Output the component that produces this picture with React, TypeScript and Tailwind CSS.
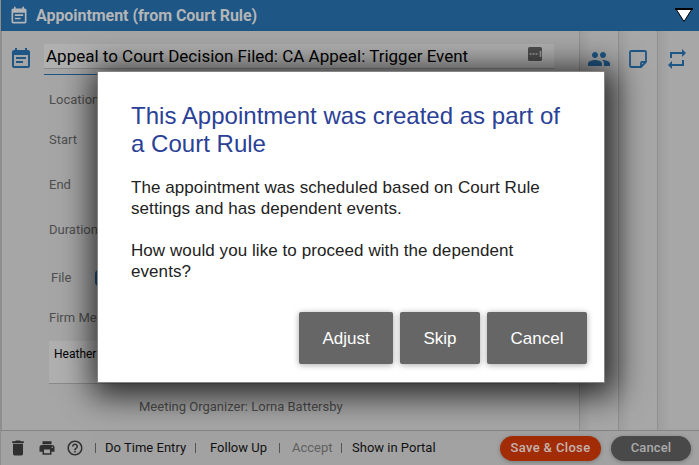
import type { ReactNode } from 'react'
import { MdDelete, MdEventNote, MdHelpOutline, MdPeople, MdPrint, MdRepeat } from 'react-icons/md'

/**
 * Appointment window with the Court Rule prompt open above it.
 */

const FIELDS = [
  { label: 'Location', className: 'h-10' },
  { label: 'Start', className: 'h-10' },
  { label: 'End', className: 'h-[50px]' },
  { label: 'Duration', className: 'h-10' },
  { label: 'File', className: 'mt-1 h-12 pl-[2px]' },
  { label: 'Firm Members', className: 'h-8' },
]

export default function App() {
  return (
    <div className="relative h-[465px] w-[699px] overflow-hidden bg-[#a6a6a6] font-['Roboto',sans-serif]">
      <div className="flex h-full border-l border-[#8e8e8e]">
        <div className="flex min-w-0 flex-1 flex-col">
          <Header />
          <div className="flex min-h-0 flex-1 border-l border-[#8e8e8e]">
            <Form />
            <SideColumn>
              <MdPeople size={24} />
            </SideColumn>
            <SideColumn>
              <NoteIcon />
            </SideColumn>
            <SideColumn>
              <MdRepeat size={24} />
            </SideColumn>
          </div>
          <Footer />
        </div>
      </div>
      <RuleDialog />
    </div>
  )
}

function Header() {
  return (
    <header className="flex h-[31px] shrink-0 items-center bg-[#1e5685] pl-2 pr-[6px] text-[#b3b5b7]">
      <MdEventNote size={20} />
      <h1 className="ml-[7px] text-[16px] font-bold leading-none tracking-[-0.05px]">
        Appointment (from Court Rule)
      </h1>
      <svg className="ml-auto" width="18" height="15" viewBox="0 0 18 15" aria-hidden="true">
        <path d="M1 1h16L9 13.5z" fill="#fff" stroke="#000" strokeWidth="1" />
        <path d="M0 1h18" stroke="#000" strokeWidth="2" />
      </svg>
    </header>
  )
}

function Form() {
  return (
    <main className="flex flex-1 flex-col">
      <div className="flex pt-[13px]">
        <MdEventNote size={24} className="ml-[7px] mt-[3px] text-[#1e5685]" />
        <div className="ml-[11px] h-[31px] w-[510px] border-b border-[#1e5685]">
          <div className="flex h-[25px] items-center justify-between border-b border-[#8a8a8a] bg-[#b0b0b0] pl-[2px] pr-3">
            <span className="pt-px text-[17px] text-black">
              Appeal to Court Decision Filed: CA Appeal: Trigger Event
            </span>
            <svg className="mb-1" width="14" height="14" viewBox="0 0 14 14" aria-hidden="true">
              <rect width="14" height="14" rx="1.5" fill="#4e4e4e" />
              <path d="M1.5 7h2M4.5 7h2M7.5 7h2M12.5 4v6" stroke="#a0a0a0" strokeWidth="1.5" />
            </svg>
          </div>
        </div>
      </div>
      <div className="mt-[5px] pl-[47px] text-[13px] text-[#4f4f4f]">
        {FIELDS.map((field) => (
          <div key={field.label} className={`flex items-center ${field.className}`}>
            <span>{field.label}</span>
            {field.label === 'File' && <span className="ml-6 h-4 w-10 rounded-sm bg-[#1e5685]" />}
          </div>
        ))}
      </div>
      <div className="ml-[47px] mt-[7px] h-[43px] w-[510px] border-b border-[#8a8a8a] bg-[#b0b0b0] pl-[5px] pt-[5px] text-xs leading-[17px] text-black">
        Heather
      </div>
      <p className="ml-[137px] mt-[15px] text-[13px] leading-4 text-[#4a4a4a]">
        Meeting Organizer: Lorna Battersby
      </p>
    </main>
  )
}

function SideColumn({ children }: { children: ReactNode }) {
  return (
    <aside className="flex w-[39px] shrink-0 justify-center border-l border-[#8f8f8f] bg-linear-to-r from-[#9e9e9e] to-[#a7a7a7] to-30% text-[#1e5685] last:w-[42px] last:pr-[3px]">
      <div className="flex h-[55px] items-center">{children}</div>
    </aside>
  )
}

function Footer() {
  return (
    <footer className="flex h-[35px] shrink-0 items-center border-t border-[#848484] bg-[#a2a2a2] pl-[7px] text-[13px] text-[#111]">
      <div className="flex w-[87px] shrink-0 items-center gap-[10px] text-[#2f2f2f]">
        <MdDelete size={20} />
        <MdPrint size={18} />
        <MdHelpOutline size={18} />
      </div>
      <Divider />
      <span className="w-[99px] shrink-0 pl-[9px] tracking-[0.02px]">Do Time Entry</span>
      <Divider />
      <span className="w-[83px] shrink-0 pl-[14px]">Follow Up</span>
      <Divider />
      <span className="w-[61px] shrink-0 pl-3 text-[#606060]">Accept</span>
      <Divider />
      <span className="shrink-0 pl-[10px]">Show in Portal</span>
      <button className="ml-auto h-[25px] w-[101px] shrink-0 rounded-full bg-[#a22c06] font-medium tracking-[0.35px] text-[#c4b4ae] shadow-[0_1px_4px_#777]">
        Save &amp; Close
      </button>
      <button className="ml-[10px] mr-2 h-[25px] w-20 shrink-0 rounded-full bg-[#494949] font-medium tracking-[0.15px] text-[#aaa] shadow-[0_1px_4px_#777]">
        Cancel
      </button>
    </footer>
  )
}

function Divider() {
  return <i className="block h-[10px] w-px shrink-0 bg-[#555]" />
}

function RuleDialog() {
  return (
    <section
      role="dialog"
      className="absolute left-[97px] top-[71px] flex h-[312px] w-[508px] flex-col border border-[#858585] bg-white px-[33px] pt-[30px] font-['Liberation_Sans',Arial,sans-serif] text-[#222] shadow-[3px_5px_30px_8px_rgba(0,0,0,0.75)]"
    >
      <h2 className="whitespace-nowrap text-[24px] leading-7 tracking-[0.02px] text-[#2a4197]">
        This Appointment was created as part of
        <br />a Court Rule
      </h2>
      <p className="mt-[19px] whitespace-nowrap text-[17px] leading-[21px] tracking-[0.07px]">
        The appointment was scheduled based on Court Rule
        <br />
        settings and has dependent events.
      </p>
      <p className="mt-[21px] whitespace-nowrap text-[17px] leading-[21px] tracking-[0.07px]">
        How would you like to proceed with the dependent
        <br />
        events?
      </p>
      <div className="-mr-4 mt-[30px] flex justify-end gap-[7px]">
        <DialogButton className="w-[94px]">Adjust</DialogButton>
        <DialogButton className="w-20">Skip</DialogButton>
        <DialogButton className="w-[100px]">Cancel</DialogButton>
      </div>
    </section>
  )
}

function DialogButton({ className, children }: { className: string; children: ReactNode }) {
  return (
    <button
      className={`h-[52px] rounded-[2px] bg-[#666] pt-px text-[17px] text-white shadow-[0_1px_6px_rgba(0,0,0,0.35)] ${className}`}
    >
      {children}
    </button>
  )
}

function NoteIcon() {
  return (
    <svg width="18" height="18" viewBox="0 0 18 18" fill="none" stroke="currentColor" strokeWidth="1.8" aria-hidden="true">
      <path d="M2.2 1h13.6a1.2 1.2 0 0 1 1.2 1.2V12l-5 5H2.2A1.2 1.2 0 0 1 1 15.8V2.2A1.2 1.2 0 0 1 2.2 1z" />
      <path d="M17 12h-3.8a1.2 1.2 0 0 0-1.2 1.2V17" />
    </svg>
  )
}
